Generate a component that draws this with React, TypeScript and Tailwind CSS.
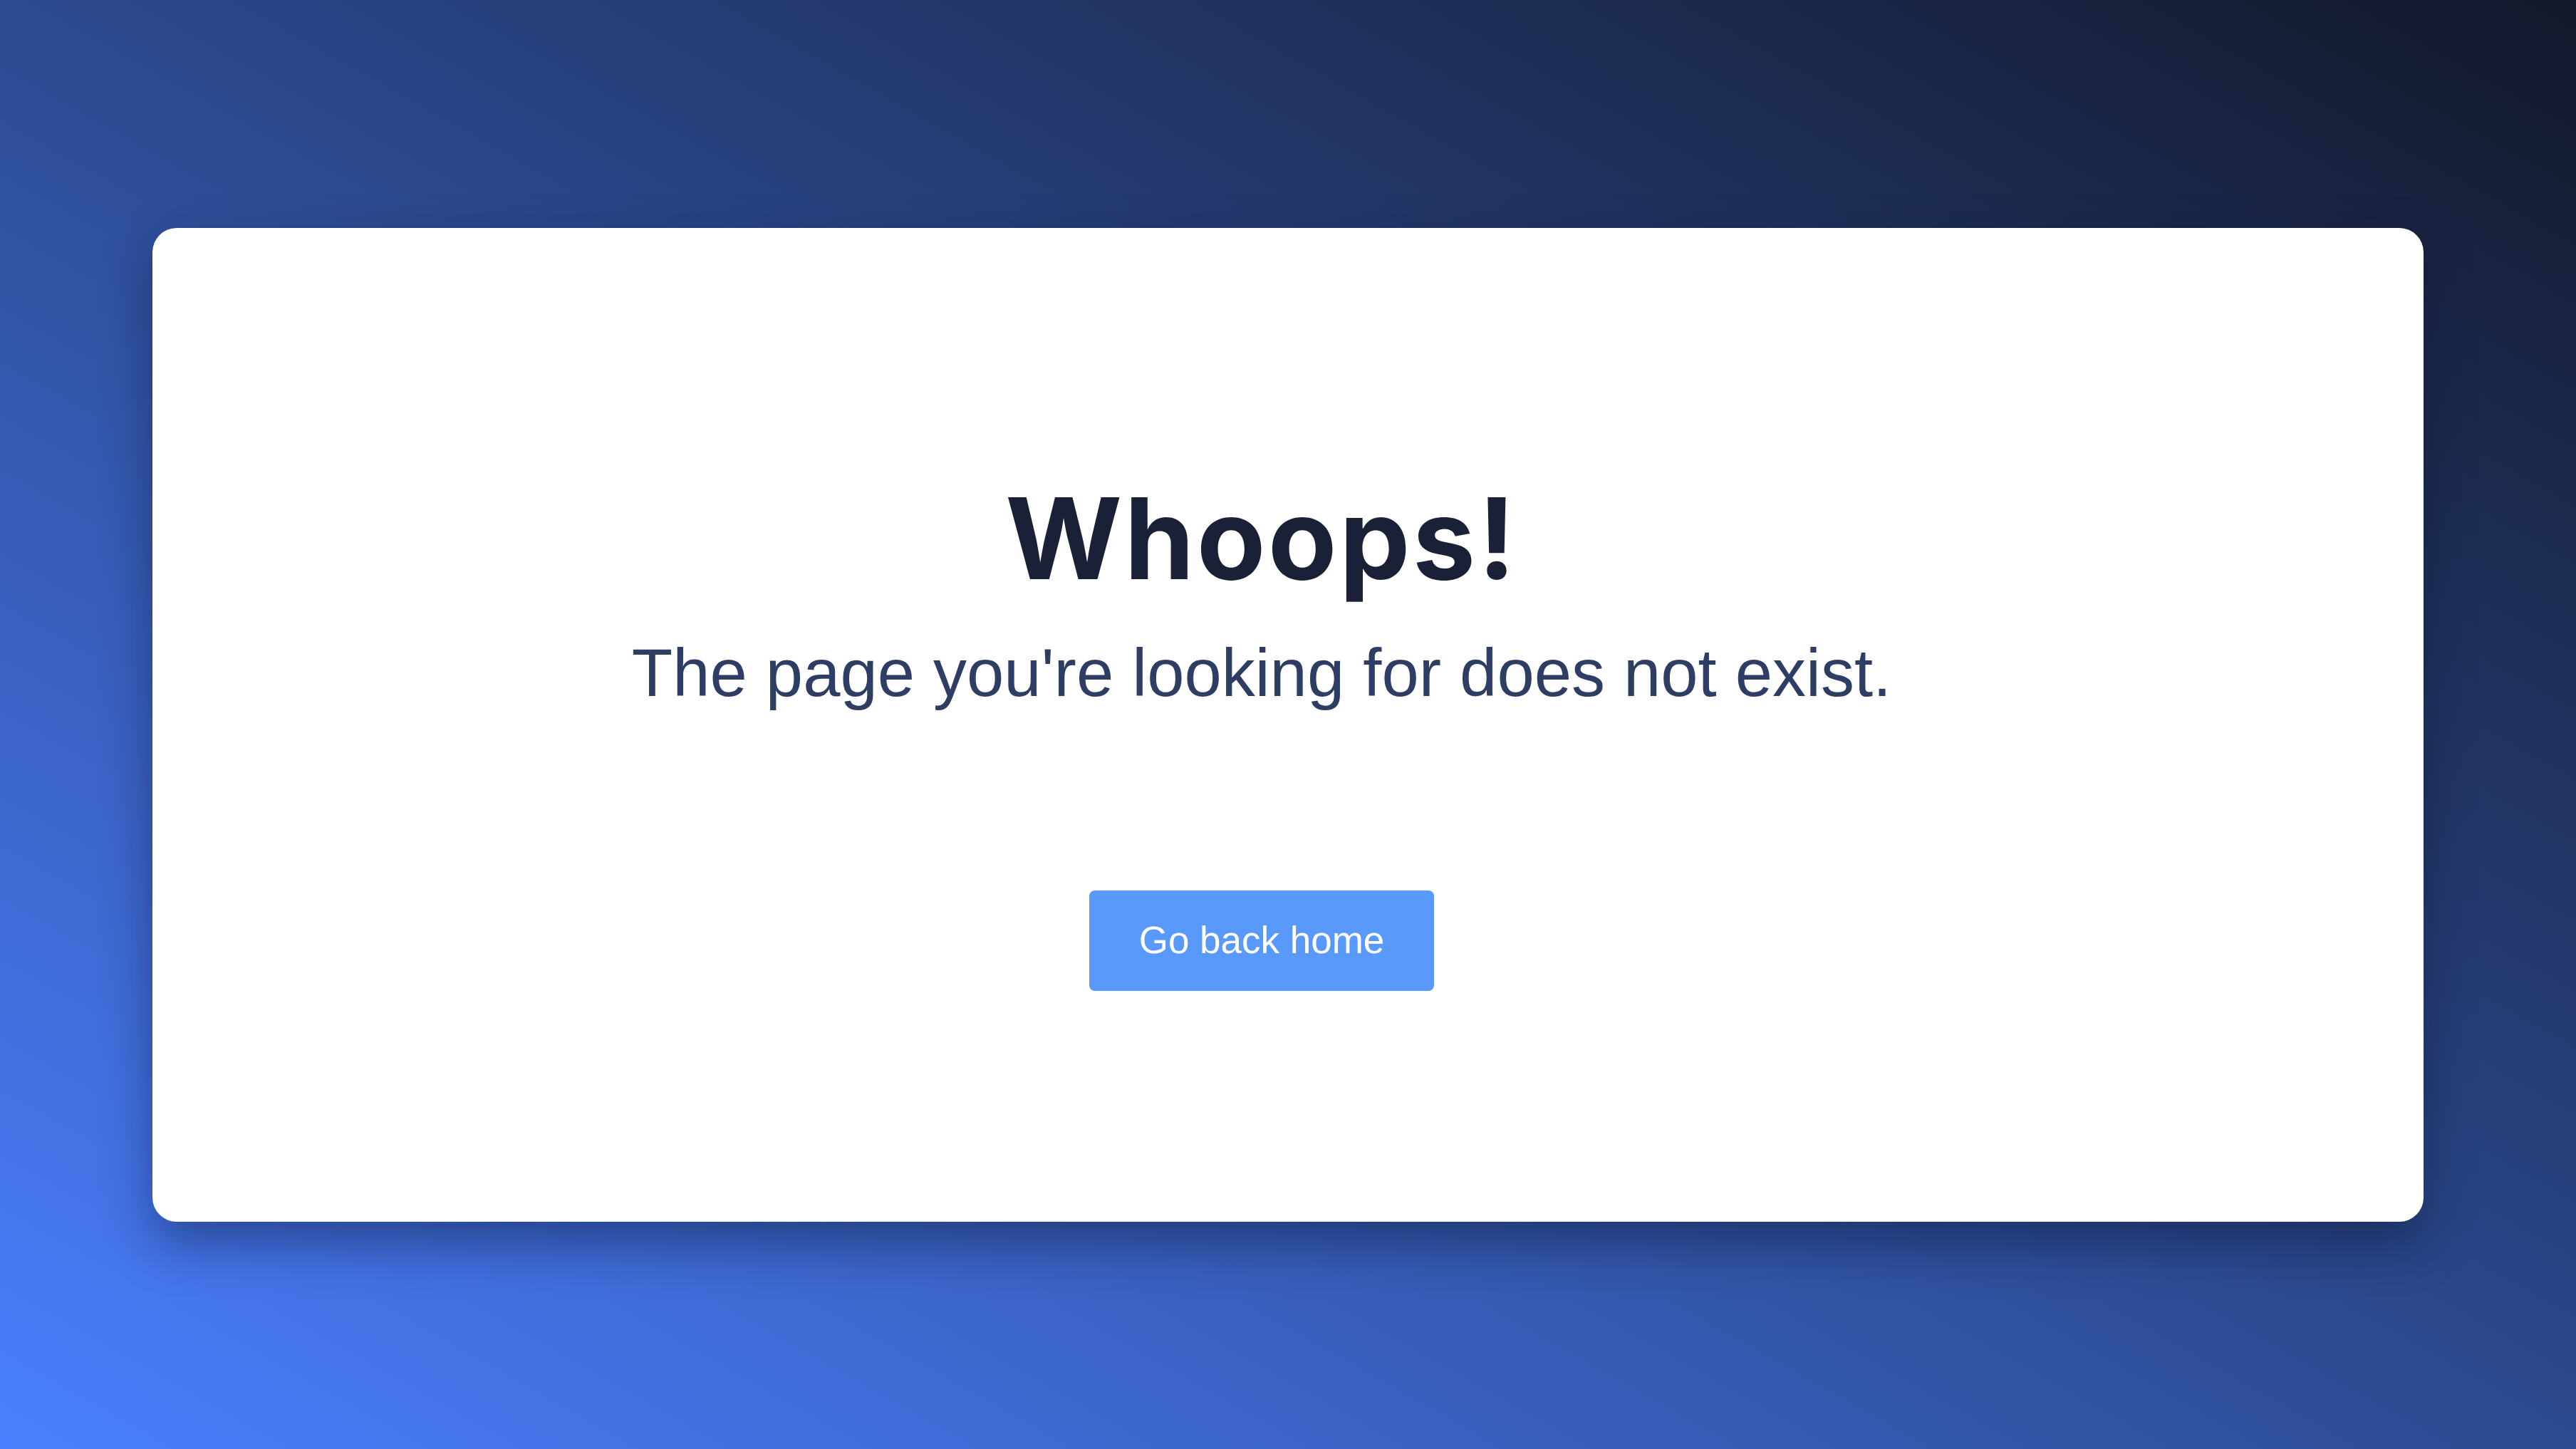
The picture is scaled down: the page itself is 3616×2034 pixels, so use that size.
export default function App() {
  return (
    <div className="h-[2034px] w-full flex items-center justify-center bg-[linear-gradient(to_top_right,#4a80ff_0%,#2c4a90_50%,#131829_100%)]">
      <div className="w-[3188px] h-[1395px] bg-white rounded-[34px] shadow-[0_30px_70px_rgba(10,20,50,0.45)] flex flex-col items-center pt-[360px] pr-[74px]">
        <h1 className="text-[158px] leading-none font-bold tracking-[0.02em] text-[#1a2035] font-['Inter',sans-serif] -mt-[3px]">
          Whoops!
        </h1>
        <p className="mt-[63px] text-[94px] leading-none text-[#2d3d63] font-['Liberation_Sans',Arial,sans-serif]">
          The page you're looking for does not exist.
        </p>
        <button className="mt-[258px] h-[141px] px-[70px] rounded-[8px] bg-[#5a99fc] text-white text-[53px] font-['Liberation_Sans',Arial,sans-serif] flex items-center justify-center">
          Go back home
        </button>
      </div>
    </div>
  );
}
